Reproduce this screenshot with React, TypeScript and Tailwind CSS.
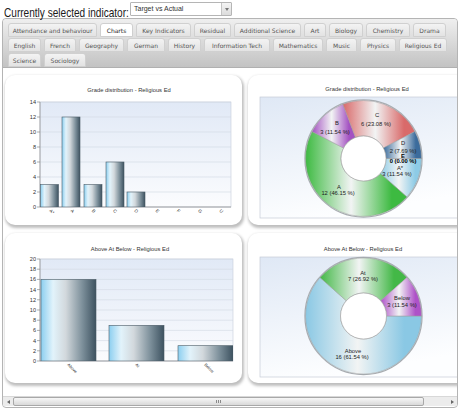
import React from "react";

type TabT = { t: string; w: string; sel?: boolean };

const tabRows: TabT[][] = [
  [
    { t: "Attendance and behaviour", w: "w-[89px]" },
    { t: "Charts", w: "w-[33px]", sel: true },
    { t: "Key Indicators", w: "w-[55px]" },
    { t: "Residual", w: "w-[37px]" },
    { t: "Additional Science", w: "w-[67px]" },
    { t: "Art", w: "w-[22px]" },
    { t: "Biology", w: "w-[34px]" },
    { t: "Chemistry", w: "w-[44px]" },
    { t: "Drama", w: "w-[33px]" },
  ],
  [
    { t: "English", w: "w-[33px]" },
    { t: "French", w: "w-[32px]" },
    { t: "Geography", w: "w-[45px]" },
    { t: "German", w: "w-[38px]" },
    { t: "History", w: "w-[33px]" },
    { t: "Information Tech", w: "w-[66px]" },
    { t: "Mathematics", w: "w-[50px]" },
    { t: "Music", w: "w-[31px]" },
    { t: "Physics", w: "w-[36px]" },
    { t: "Religious Ed", w: "w-[48px]" },
  ],
  [
    { t: "Science", w: "w-[33px]" },
    { t: "Sociology", w: "w-[42px]" },
  ],
];

const SF = "Liberation Sans, Arial, sans-serif";

type Bar = { x: number; w: number; v: number };

function BarChart(props: {
  id: string;
  title: string;
  tx: number;
  ty: number;
  px: number;
  py: number;
  pw: number;
  ph: number;
  max: number;
  step: number;
  bars: Bar[];
  labels: { x: number; t: string }[];
  lfs: number;
}) {
  const { id, title, tx, ty, px, py, pw, ph, max, step, bars, labels, lfs } = props;
  const ticks: number[] = [];
  for (let v = 0; v <= max; v += step) ticks.push(v);
  const yOf = (v: number) => py + ph - (v / max) * ph;
  return (
    <svg width="237" height="150" viewBox="0 0 237 150" className="block" fontFamily={SF}>
      <defs>
        <linearGradient id={`${id}-bg`} x1="0" y1="0" x2="0" y2="1">
          <stop offset="0" stopColor="#e1e9f6" />
          <stop offset="1" stopColor="#fbfcfe" />
        </linearGradient>
        <linearGradient id={`${id}-bar`} x1="0" y1="0" x2="1" y2="0">
          <stop offset="0" stopColor="#8ccff0" />
          <stop offset="0.22" stopColor="#e2f3fb" />
          <stop offset="0.45" stopColor="#d2d8dc" />
          <stop offset="0.75" stopColor="#7d909b" />
          <stop offset="1" stopColor="#3d5260" />
        </linearGradient>
        <clipPath id={`${id}-clip`}>
          <rect x={px} y={py - 1} width={pw} height={ph + 1} />
        </clipPath>
      </defs>
      <text x={tx} y={ty} textAnchor="middle" fontSize="5.8" fill="#333">
        {title}
      </text>
      <rect x={px} y={py} width={pw} height={ph} fill={`url(#${id}-bg)`} stroke="#c6cedb" strokeWidth="0.6" />
      {ticks.map((v) => (
        <line key={`g${v}`} x1={px} x2={px + pw} y1={yOf(v)} y2={yOf(v)} stroke="#d2d9e3" strokeWidth="0.6" />
      ))}
      {ticks.map((v) => (
        <g key={`t${v}`}>
          <line x1={px - 3} x2={px} y1={yOf(v)} y2={yOf(v)} stroke="#777" strokeWidth="0.6" />
          <text x={px - 4} y={yOf(v) + 2} textAnchor="end" fontSize="5.6" fill="#333">
            {v}
          </text>
        </g>
      ))}
      <line x1={px} x2={px} y1={py} y2={py + ph} stroke="#8a8a8a" strokeWidth="0.7" />
      <line x1={px} x2={px + pw} y1={py + ph} y2={py + ph} stroke="#8a8a8a" strokeWidth="0.7" />
      <g clipPath={`url(#${id}-clip)`}>
        {bars.map((b, i) => (
          <rect
            key={i}
            x={b.x}
            y={yOf(b.v)}
            width={b.w}
            height={py + ph - yOf(b.v)}
            fill={`url(#${id}-bar)`}
            stroke="#4b5b66"
            strokeWidth="0.6"
          />
        ))}
      </g>
      {labels.map((l, i) => (
        <text
          key={i}
          transform={`translate(${l.x - 1.5} ${py + ph + 4}) rotate(45)`}
          fontSize={lfs}
          fill="#333"
        >
          {l.t}
        </text>
      ))}
    </svg>
  );
}

type Slice = { a0: number; a1: number; c: string };

function arc(cx: number, cy: number, R: number, r: number, a0: number, a1: number) {
  const rad = (a: number) => (a * Math.PI) / 180;
  const p = (rr: number, a: number) => `${cx + rr * Math.cos(rad(a))} ${cy + rr * Math.sin(rad(a))}`;
  const large = a1 - a0 > 180 ? 1 : 0;
  return `M ${p(R, a0)} A ${R} ${R} 0 ${large} 1 ${p(R, a1)} L ${p(r, a1)} A ${r} ${r} 0 ${large} 0 ${p(r, a0)} Z`;
}

function Donut(props: {
  id: string;
  title: string;
  tx: number;
  ty: number;
  bx: number;
  by: number;
  bw: number;
  bh: number;
  cx: number;
  cy: number;
  R: number;
  r: number;
  slices: Slice[];
  labels: { x: number; y: number; t: string; b?: boolean }[];
}) {
  const { id, title, tx, ty, bx, by, bw, bh, cx, cy, R, r, slices, labels } = props;
  return (
    <svg width="237" height="150" viewBox="0 0 237 150" className="block" fontFamily={SF}>
      <defs>
        <linearGradient id={`${id}-bg`} x1="0" y1="0" x2="0.3" y2="1">
          <stop offset="0" stopColor="#dfe8f5" />
          <stop offset="1" stopColor="#fdfeff" />
        </linearGradient>
        {slices.map((s, i) => (
          <linearGradient key={i} id={`${id}-s${i}`} x1="0" y1="0" x2="1" y2="0">
            <stop offset="0" stopColor={s.c} />
            <stop offset="0.45" stopColor="#f2f4f4" />
            <stop offset="0.85" stopColor={s.c} />
            <stop offset="1" stopColor={s.c} />
          </linearGradient>
        ))}
      </defs>
      <text x={tx} y={ty} textAnchor="middle" fontSize="5.8" fill="#333">
        {title}
      </text>
      <rect x={bx} y={by} width={bw} height={bh} fill={`url(#${id}-bg)`} stroke="#c5ccd7" strokeWidth="0.7" />
      <circle cx={cx} cy={cy} r={R + 0.6} fill="none" stroke="#a9aeb3" strokeWidth="1.2" />
      {slices.map((s, i) => (
        <path key={i} d={arc(cx, cy, R, r, s.a0, s.a1)} fill={`url(#${id}-s${i})`} stroke="#9c9c9c" strokeWidth="0.5" />
      ))}
      <circle cx={cx} cy={cy} r={r} fill="#ffffff" stroke="#9a9a9a" strokeWidth="0.6" />
      {labels.map((l, i) => (
        <text
          key={i}
          x={l.x}
          y={l.y}
          textAnchor="middle"
          fontSize="5.8"
          fill={l.b ? "#000" : "#222"}
          fontWeight={l.b ? 700 : 400}
        >
          {l.t}
        </text>
      ))}
    </svg>
  );
}

function Card({ children }: { children: React.ReactNode }) {
  return (
    <div className="h-[150px] w-[237px] rounded-[10px] bg-white shadow-[1px_2px_3px_1px_rgba(0,0,0,0.26)] overflow-hidden">
      {children}
    </div>
  );
}

const cat1 = 191 / 9;

export default function App() {
  return (
    <div className="w-[461px] h-[409px] bg-white overflow-hidden font-['Liberation_Sans',Arial,sans-serif]">
      <div className="h-[18px] flex items-start pl-[4px]">
        <div className="w-[125px] h-[18px] shrink-0">
          <span className="inline-block origin-left scale-x-[0.775] text-[13px] leading-[17px] text-[#1a1a1a] whitespace-nowrap">
            Currently selected indicator:
          </span>
        </div>
        <div className="ml-[1px] mt-[2px] h-[14px] w-[102px] flex border border-[#b5b5b5] bg-white rounded-[1px]">
          <div className="flex-1 pl-[3px] text-[7px] leading-[12px] text-[#333] whitespace-nowrap">
            Target vs Actual
          </div>
          <div className="w-[10px] h-full border-l border-[#c4c4c4] bg-gradient-to-b from-[#f4f4f4] to-[#dcdcdc] flex items-center justify-center">
            <svg width="4" height="3" viewBox="0 0 4 3">
              <path d="M0 0 L4 0 L2 3 Z" fill="#777" />
            </svg>
          </div>
        </div>
      </div>

      <div className="ml-[2px] w-[456px] h-[390px] border border-[#b4b4b4] rounded-[4px] overflow-hidden flex flex-col bg-white">
        <div className="h-[49px] shrink-0 bg-gradient-to-b from-[#efefef] to-[#c3c3c3] border-b border-[#b0b0b0] rounded-t-[3px] pl-[5px] pt-[4px] flex flex-col gap-[1px] font-['Verdana','DejaVu_Sans',sans-serif]">
          {tabRows.map((row, ri) => (
            <div key={ri} className="flex gap-[3px] h-[14px]">
              {row.map((tab) => (
                <div
                  key={tab.t}
                  className={`${tab.w} h-[14px] shrink-0 flex items-center justify-center whitespace-nowrap text-[6px] rounded-t-[3px] border ${
                    tab.sel
                      ? "bg-white border-[#cfcfcf] text-[#1e1e1e]"
                      : "bg-gradient-to-b from-[#f3f3f3] to-[#e3e3e3] border-[#d0d0d0] text-[#555]"
                  }`}
                >
                  {tab.t}
                </div>
              ))}
            </div>
          ))}
        </div>

        <div className="h-[328px] shrink-0 overflow-hidden pl-[2px] pt-[7px]">
          <div className="grid grid-cols-[237px_237px] gap-x-[6px] gap-y-[8px] w-[480px]">
            <Card>
              <BarChart
                id="b1"
                title="Grade distribution - Religious Ed"
                tx={124}
                ty={17}
                px={35}
                py={27}
                pw={191}
                ph={105}
                max={14}
                step={2}
                lfs={4.6}
                bars={[
                  { x: 35.5, w: 18, v: 3 },
                  { x: 57, w: 18, v: 12 },
                  { x: 79, w: 18, v: 3 },
                  { x: 101, w: 18, v: 6 },
                  { x: 122, w: 18, v: 2 },
                ]}
                labels={["A*", "A", "B", "C", "D", "E", "F", "G", "U"].map((t, i) => ({
                  x: 35 + cat1 * (i + 0.5),
                  t,
                }))}
              />
            </Card>
            <Card>
              <Donut
                id="d1"
                title="Grade distribution - Religious Ed"
                tx={119}
                ty={16}
                bx={12}
                by={22}
                bw={213}
                bh={121}
                cx={115.5}
                cy={83.5}
                R={58}
                r={22.5}
                slices={[
                  { a0: 0, a1: 41.54, c: "#8dcbe6" },
                  { a0: 41.54, a1: 207.69, c: "#3dba41" },
                  { a0: 207.69, a1: 249.23, c: "#a452c2" },
                  { a0: 249.23, a1: 332.31, c: "#d96a6a" },
                  { a0: 332.31, a1: 360, c: "#3c6c9c" },
                ]}
                labels={[
                  { x: 129, y: 42, t: "C" },
                  { x: 128, y: 51, t: "6 (23.08 %)" },
                  { x: 89, y: 50, t: "B" },
                  { x: 87, y: 59, t: "3 (11.54 %)" },
                  { x: 155, y: 70, t: "D" },
                  { x: 155, y: 77.5, t: "2 (7.69 %)" },
                  { x: 155, y: 82.5, t: "E", b: true },
                  { x: 155, y: 88, t: "0 (0.00 %)", b: true },
                  { x: 152, y: 95, t: "A*" },
                  { x: 149, y: 101, t: "3 (11.54 %)" },
                  { x: 91, y: 114, t: "A" },
                  { x: 90, y: 120, t: "12 (46.15 %)" },
                ]}
              />
            </Card>
            <Card>
              <BarChart
                id="b2"
                title="Above At Below - Religious Ed"
                tx={125}
                ty={18}
                px={35}
                py={26}
                pw={193}
                ph={102}
                max={20}
                step={2}
                lfs={4.2}
                bars={[
                  { x: 36, w: 55, v: 16 },
                  { x: 104, w: 55, v: 7 },
                  { x: 173, w: 55, v: 3 },
                ]}
                labels={[
                  { x: 63.5, t: "Above" },
                  { x: 131.5, t: "At" },
                  { x: 200.5, t: "Below" },
                ]}
              />
            </Card>
            <Card>
              <Donut
                id="d2"
                title="Above At Below - Religious Ed"
                tx={115}
                ty={18}
                bx={12}
                by={24}
                bw={213}
                bh={120}
                cx={115.5}
                cy={83}
                R={58}
                r={23}
                slices={[
                  { a0: 0, a1: 221.54, c: "#8ac8e4" },
                  { a0: 221.54, a1: 318.46, c: "#43b847" },
                  { a0: 318.46, a1: 360, c: "#ae52c8" },
                ]}
                labels={[
                  { x: 115, y: 42, t: "At" },
                  { x: 115, y: 48, t: "7 (26.92 %)" },
                  { x: 154, y: 67, t: "Below" },
                  { x: 154, y: 74, t: "3 (11.54 %)" },
                  { x: 105, y: 120, t: "Above" },
                  { x: 104, y: 126, t: "16 (61.54 %)" },
                ]}
              />
            </Card>
          </div>
        </div>

        <div className="h-[10px] shrink-0 flex bg-[#ececec] border-t border-[#d8d8d8]">
          <div className="w-[10px] h-full flex items-center justify-center">
            <svg width="3" height="4" viewBox="0 0 3 4">
              <path d="M3 0 L3 4 L0 2 Z" fill="#666" />
            </svg>
          </div>
          <div className="w-[411px] h-full rounded-[2px] border border-[#a8a8a8] bg-gradient-to-b from-[#f7f7f7] to-[#d9d9d9] flex items-center justify-center gap-[1px]">
            <div className="w-[1px] h-[3px] bg-[#8a8a8a]" />
            <div className="w-[1px] h-[3px] bg-[#8a8a8a]" />
            <div className="w-[1px] h-[3px] bg-[#8a8a8a]" />
          </div>
          <div className="flex-1" />
          <div className="w-[10px] h-full flex items-center justify-center">
            <svg width="3" height="4" viewBox="0 0 3 4">
              <path d="M0 0 L0 4 L3 2 Z" fill="#666" />
            </svg>
          </div>
        </div>
      </div>
    </div>
  );
}
